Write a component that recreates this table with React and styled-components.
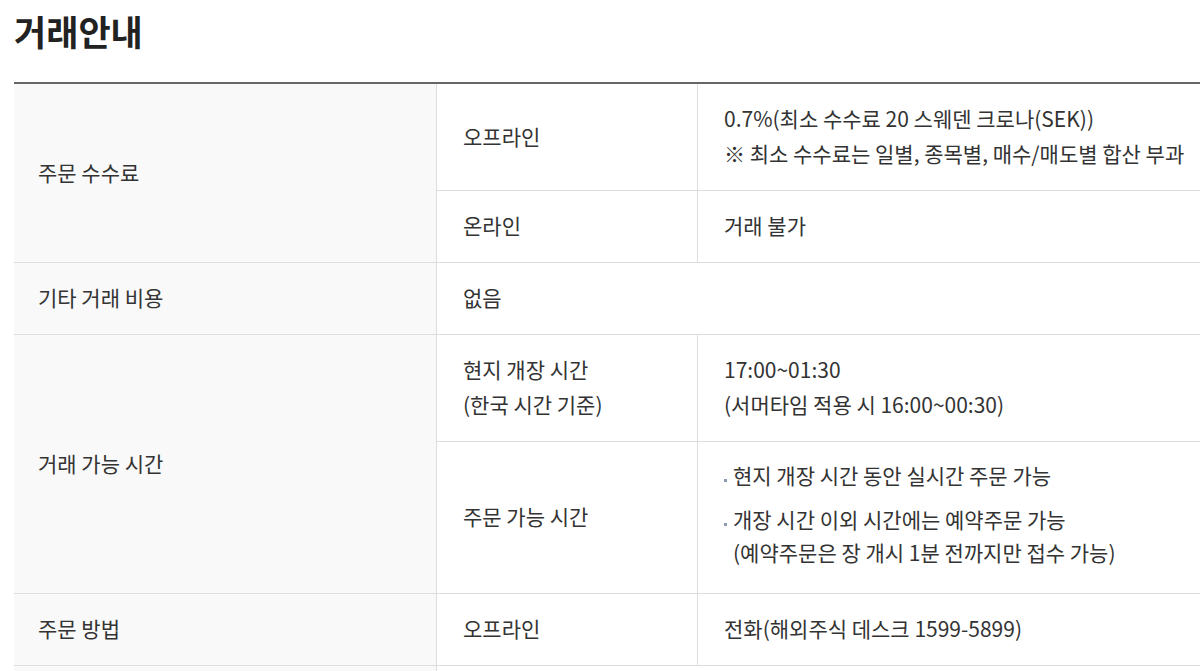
import React from 'react';
import styled, { createGlobalStyle } from 'styled-components';

const GlobalStyle = createGlobalStyle`
  html, body {
    margin: 0;
    padding: 0;
    background: #fff;
    overflow: hidden;
  }
  body {
    font-family: "Noto Sans CJK KR", "Noto Sans", sans-serif;
    color: #333;
  }
`

const Page = styled.div`
  padding: 7px 0 0 14px;
`

const Title = styled.h2`
  margin: 0;
  font-size: 35px;
  font-weight: 700;
  letter-spacing: 0;
  line-height: 48px;
  color: #222;
`

const Table = styled.table`
  margin-top: 27px;
  width: 100%;
  border-collapse: collapse;
  table-layout: fixed;
  border-top: 2px solid #666;
`

const Head = styled.th`
  width: 398px;
  height: ${p => p.$h || 'auto'};
  padding: 17px 0 19px 24px;
  background: #f9f9f9;
  border-bottom: 1px solid #ddd;
  border-right: 1px solid #ddd;
  text-align: left;
  font-weight: 400;
  font-size: 21px;
  letter-spacing: 0;
  line-height: 35px;
  color: #333;
`

const Cell = styled.td`
  width: ${p => p.$w || 'auto'};
  padding: 17px 0 19px 26px;
  border-bottom: 1px solid #ddd;
  border-right: ${p => (p.$last ? 'none' : '1px solid #ddd')};
  font-size: 21px;
  letter-spacing: 0;
  line-height: 35px;
  color: #333;
  vertical-align: middle;
`

const DotList = styled.ul`
  margin: 0;
  padding: 0 0 5px;
  list-style: none;
`

const Dot = styled.li`
  position: relative;
  padding-left: 9px;
  line-height: 33px;
  & + & {
    margin-top: 11px;
  }
  &::before {
    content: '';
    position: absolute;
    left: 0;
    top: 20px;
    width: 3px;
    height: 3px;
    background: #8b9ab3;
  }
`

export default function App() {
    return (
        <Page>
            <GlobalStyle />
            <Title>거래안내</Title>
            <Table>
                <tbody>
                    <tr>
                        <Head rowSpan={2}>주문 수수료</Head>
                        <Cell $w="234px">오프라인</Cell>
                        <Cell $last>
                            0.7%(최소 수수료 20 스웨덴 크로나(SEK))<br />
                            ※ 최소 수수료는 일별, 종목별, 매수/매도별 합산 부과
                        </Cell>
                    </tr>
                    <tr>
                        <Cell>온라인</Cell>
                        <Cell $last>거래 불가</Cell>
                    </tr>
                    <tr>
                        <Head>기타 거래 비용</Head>
                        <Cell colSpan={2} $last>없음</Cell>
                    </tr>
                    <tr>
                        <Head rowSpan={2}>거래 가능 시간</Head>
                        <Cell>현지 개장 시간<br />(한국 시간 기준)</Cell>
                        <Cell $last>17:00~01:30<br />(서머타임 적용 시 16:00~00:30)</Cell>
                    </tr>
                    <tr>
                        <Cell>주문 가능 시간</Cell>
                        <Cell $last>
                            <DotList>
                                <Dot>현지 개장 시간 동안 실시간 주문 가능</Dot>
                                <Dot>개장 시간 이외 시간에는 예약주문 가능<br />(예약주문은 장 개시 1분 전까지만 접수 가능)</Dot>
                            </DotList>
                        </Cell>
                    </tr>
                    <tr>
                        <Head>주문 방법</Head>
                        <Cell>오프라인</Cell>
                        <Cell $last>전화(해외주식 데스크 1599-5899)</Cell>
                    </tr>
                    <tr>
                        <Head $h="35px" />
                        <Cell colSpan={2} $last />
                    </tr>
                </tbody>
            </Table>
        </Page>
    )
}
